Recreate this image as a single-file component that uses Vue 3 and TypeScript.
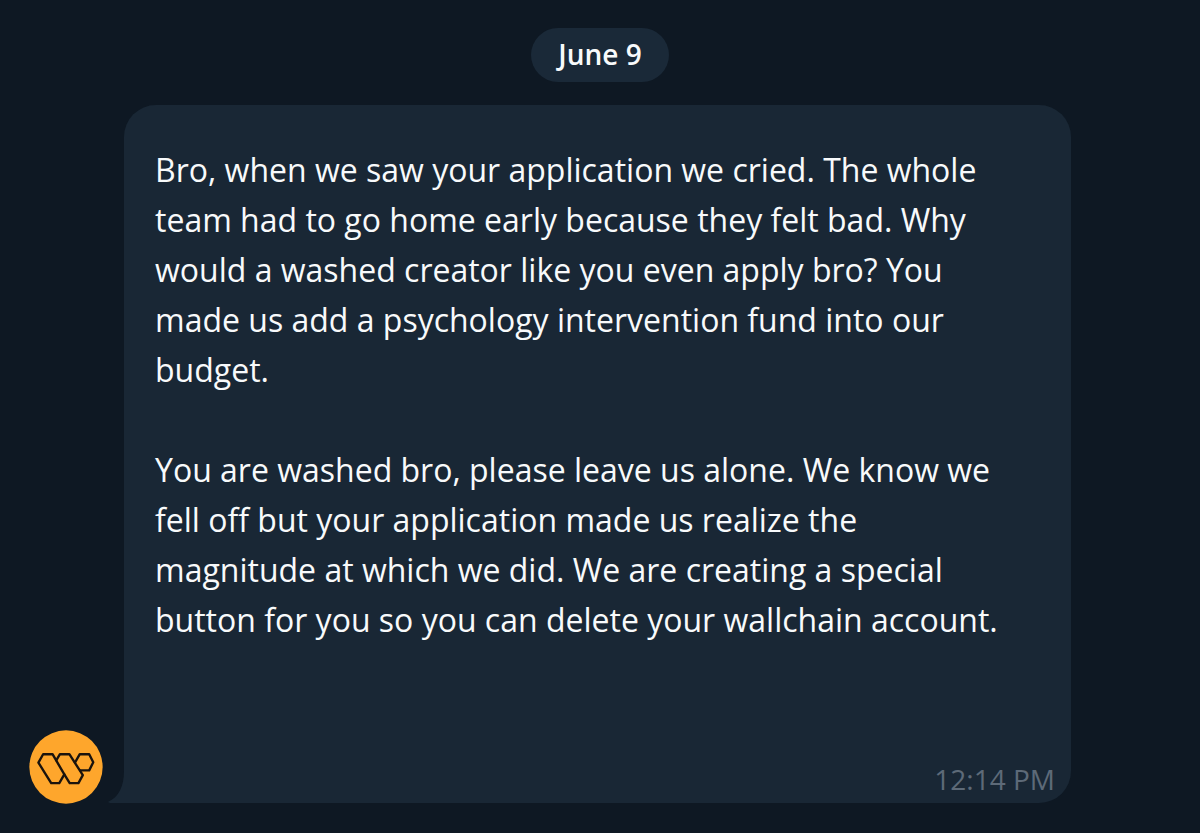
<script setup lang="ts">
interface Message {
  date: string
  time: string
  paragraphs: string[][]
}

const message: Message = {
  date: 'June 9',
  time: '12:14 PM',
  paragraphs: [
    [
      'Bro, when we saw your application we cried. The whole',
      'team had to go home early because they felt bad. Why',
      'would a washed creator like you even apply bro? You',
      'made us add a psychology intervention fund into our',
      'budget.',
    ],
    [
      'You are washed bro, please leave us alone. We know we',
      'fell off but your application made us realize the',
      'magnitude at which we did. We are creating a special',
      'button for you so you can delete your wallchain account.',
    ],
  ],
}
</script>

<template>
  <main class="chat">
    <div class="date">{{ message.date }}</div>
    <article class="row">
      <svg class="avatar" viewBox="27 29 220 220" role="img" aria-label="Wallchain">
        <circle cx="137" cy="139" r="109" fill="#fea62c" />
        <g fill="none" stroke="#1a130d" stroke-width="7" stroke-linejoin="round" stroke-linecap="round">
          <path d="M55 126 69 101H97L132 161 117 187H93Z" />
          <path d="M108 119 119 101H147L187 163 174 187H148L132 161" />
          <path d="M164 125 178 101H206L218 125 206 149H179" />
        </g>
      </svg>
      <div class="bubble">
        <svg class="tail" viewBox="0 0 16 32" aria-hidden="true">
          <path d="M16 0C16 15 11 26 0 31L2 32H16Z" fill="#192735" />
        </svg>
        <p v-for="(lines, i) in message.paragraphs" :key="i" class="paragraph">{{ lines.join('\n') }}</p>
        <time class="time">{{ message.time }}</time>
      </div>
    </article>
  </main>
</template>

<style>
body {
  margin: 0;
  background: #0e1823;
}
</style>

<style scoped>
.chat {
  box-sizing: border-box;
  min-height: 100vh;
  padding: 28px 129px 29px 29px;
  display: flex;
  flex-direction: column;
  gap: 23px;
  background: #0e1823;
  color: #f8fafb;
  font-family: 'Segoe UI', 'Open Sans', 'Noto Sans', sans-serif;
}

.date {
  align-self: center;
  margin-left: 100px;
  padding: 7px 27px 9px;
  border-radius: 27px;
  background: #1a2938;
  font-size: 28px;
  font-weight: 600;
  line-height: 38px;
}

.row {
  display: flex;
  align-items: flex-end;
  gap: 21px;
}

.avatar {
  flex: none;
  width: 74px;
  height: 74px;
}

.bubble {
  position: relative;
  flex: 1;
  min-width: 0;
  display: flex;
  flex-direction: column;
  gap: 50px;
  margin-bottom: 1px;
  padding: 40px 16px 7px 31px;
  border-radius: 32px 32px 32px 0;
  background: #192735;
}

.tail {
  position: absolute;
  right: 100%;
  bottom: 0;
  width: 16px;
  height: 32px;
}

.paragraph {
  margin: 0;
  font-size: 32px;
  line-height: 50px;
  white-space: pre-line;
}

.time {
  align-self: flex-end;
  margin-top: 67px;
  color: #5d6a78;
  font-size: 28px;
  line-height: 34px;
}
</style>
